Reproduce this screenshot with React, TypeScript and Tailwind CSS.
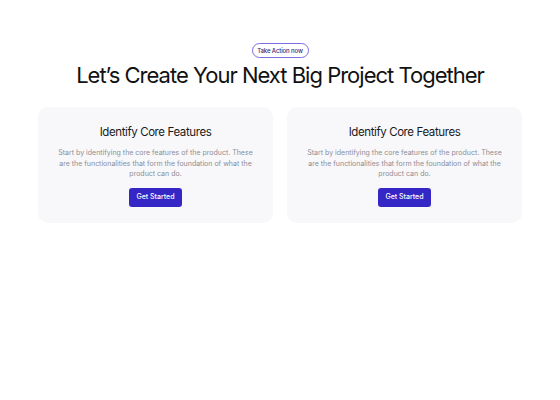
import React from "react";

function Card() {
  return (
    <div className="flex flex-col items-center rounded-[10px] bg-[#f8f8fa] px-5 pt-[18px] pb-[16px]">
      <h3 className="text-[11.5px] leading-[14px] font-normal tracking-[-0.035em] text-[#1a1a1a]">Identify Core Features</h3>
      <p className="mt-[9px] text-center text-[7px] leading-[10.5px] text-[#8d8d96] max-w-[195px]">
        Start by identifying the core features of the product. These are the functionalities that form the foundation of what the product can do.
      </p>
      <button className="mt-[8px] h-[19px] w-[53px] rounded-[3px] bg-[#3427c6] text-[7px] font-medium text-white">
        Get Started
      </button>
    </div>
  );
}

export default function App() {
  return (
    <div className="min-h-[400px] w-[560px] bg-white pt-[43px]" style={{ fontFamily: "Inter, 'Noto Sans', sans-serif" }}>
      <div className="flex flex-col items-center">
        <span className="flex h-[15px] w-[57px] items-center justify-center rounded-full border border-[#7a6ee0] text-[6px] font-medium tracking-[-0.02em] text-[#2d2b78]">
          Take Action now
        </span>
        <h1 className="mt-[3px] text-[22px] leading-[28px] font-normal tracking-[-0.045em] text-[#111]">
          Let’s Create Your Next Big Project Together
        </h1>
      </div>
      <div className="mx-[38px] mt-[18px] grid grid-cols-2 gap-[14px]">
        <Card />
        <Card />
      </div>
    </div>
  );
}
